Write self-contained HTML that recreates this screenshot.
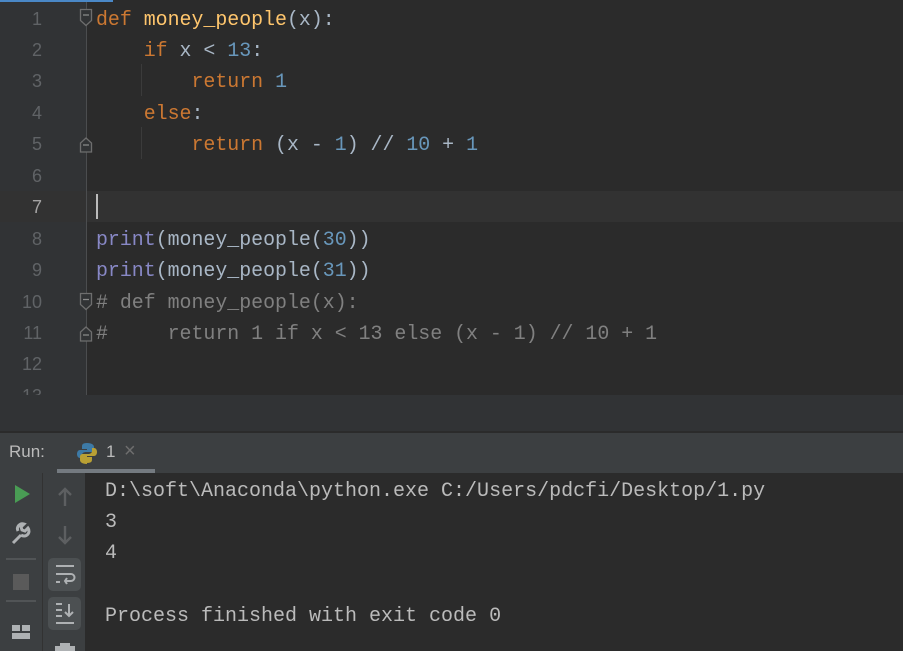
<!DOCTYPE html>
<html><head><meta charset="utf-8"><style>
*{margin:0;padding:0;box-sizing:border-box}
body{width:903px;height:651px;overflow:hidden;background:#2b2b2b;position:relative;font-family:"Liberation Mono",monospace}
.abs{position:absolute}
#gut{left:0;top:0;width:86px;height:395px;background:#313335}
#fold{left:86px;top:0;width:1px;height:395px;background:#4b4d4f}
#cur{left:0;top:191px;width:903px;height:31px;background:#323232}
#code{left:0;top:3.5px;width:903px;font-size:19.9px;line-height:31.45px;white-space:pre}
.ln{position:absolute;left:0;width:42px;text-align:right;color:#606366;font-family:"Liberation Sans",sans-serif;font-size:18px}
.cl{position:absolute;left:96px;color:#a9b7c6}
.k{color:#cc7832}.f{color:#ffc66d}.n{color:#6897bb}.b{color:#8888c6}.c{color:#808080}
.con{font-size:20px;color:#bbbbbb;white-space:pre;left:105px}
</style></head><body>
<div class="abs" id="gut"></div>
<div class="abs" id="cur"></div>
<div class="abs" id="fold"></div>
<div class="abs" style="left:0;top:0;width:113px;height:2px;background:#4a88c7"></div>
<div class="abs" style="left:141px;top:64px;width:1px;height:32px;background:#3b3b3b"></div>
<div class="abs" style="left:141px;top:127px;width:1px;height:32px;background:#3b3b3b"></div>
<div class="abs" style="left:96px;top:194px;width:2px;height:25px;background:#bbbbbb"></div>
<div class="abs" id="code">
<div class="ln" style="top:0">1</div><div class="cl" style="top:0"><span class="k">def</span> <span class="f">money_people</span>(x):</div>
<div class="ln" style="top:31.45px">2</div><div class="cl" style="top:31.45px">    <span class="k">if</span> x &lt; <span class="n">13</span>:</div>
<div class="ln" style="top:62.9px">3</div><div class="cl" style="top:62.9px">        <span class="k">return</span> <span class="n">1</span></div>
<div class="ln" style="top:94.35px">4</div><div class="cl" style="top:94.35px">    <span class="k">else</span>:</div>
<div class="ln" style="top:125.8px">5</div><div class="cl" style="top:125.8px">        <span class="k">return</span> (x - <span class="n">1</span>) // <span class="n">10</span> + <span class="n">1</span></div>
<div class="ln" style="top:157.25px">6</div>
<div class="ln" style="top:188.7px;color:#a4a3a3">7</div>
<div class="ln" style="top:220.15px">8</div><div class="cl" style="top:220.15px"><span class="b">print</span>(money_people(<span class="n">30</span>))</div>
<div class="ln" style="top:251.6px">9</div><div class="cl" style="top:251.6px"><span class="b">print</span>(money_people(<span class="n">31</span>))</div>
<div class="ln" style="top:283.05px">10</div><div class="cl c" style="top:283.05px"># def money_people(x):</div>
<div class="ln" style="top:314.5px">11</div><div class="cl c" style="top:314.5px">#     return 1 if x &lt; 13 else (x - 1) // 10 + 1</div>
<div class="ln" style="top:345.95px">12</div>
<div class="ln" style="top:377.4px">13</div>
</div>
<svg class="abs" style="left:79px;top:8px" width="14" height="350">
<g fill="#313335" stroke="#6e6e6e" stroke-width="1.3">
<path d="M1.5 1.5h11v11l-5.5 5l-5.5-5z"/><path d="M1.5 144v-9l5.5-5l5.5 5v9z"/>
<path d="M1.5 285.5h11v11l-5.5 5l-5.5-5z"/><path d="M1.5 333v-9l5.5-5l5.5 5v9z"/>
</g>
<g stroke="#8a8a8a" stroke-width="1.3"><path d="M4 7h6M4 137h6M4 291.5h6M4 327h6"/></g>
</svg>
<div class="abs" style="left:0;top:395px;width:903px;height:36px;background:#313335"></div>
<div class="abs" style="left:0;top:431px;width:903px;height:2px;background:#2b2b2b"></div>
<div class="abs" style="left:0;top:433px;width:903px;height:40px;background:#3c3f41"></div>
<div class="abs" style="left:9px;top:442px;font-family:'Liberation Sans',sans-serif;font-size:17px;color:#bbbbbb">Run:</div>
<svg class="abs" style="left:76px;top:442px" width="22" height="22" viewBox="0 0 22 22">
<path d="M11 1c-5 0-5 2-5 4v2h5v1H4c-2 0-3 2-3 4s1 4 3 4h2v-3c0-2 2-3 4-3h5c2 0 3-1 3-3V5c0-2-2-4-7-4z" fill="#3d7aa6"/>
<path d="M11 21c5 0 5-2 5-4v-2h-5v-1h7c2 0 3-2 3-4s-1-4-3-4h-2v3c0 2-2 3-4 3H7c-2 0-3 1-3 3v3c0 2 2 4 7 4z" fill="#b9a034"/>
</svg>
<div class="abs" style="left:106px;top:442px;font-family:'Liberation Sans',sans-serif;font-size:17px;color:#bbbbbb">1</div>
<div class="abs" style="left:124px;top:440px;font-family:'Liberation Sans',sans-serif;font-size:20px;color:#6e6e6e">×</div>
<div class="abs" style="left:57px;top:469px;width:98px;height:4px;background:#747a80"></div>
<div class="abs" style="left:0;top:473px;width:42px;height:178px;background:#3c3f41"></div>
<div class="abs" style="left:42px;top:473px;width:1px;height:178px;background:#323232"></div>
<div class="abs" style="left:43px;top:473px;width:42px;height:178px;background:#3c3f41"></div>
<svg class="abs" style="left:0;top:473px" width="86" height="178">
<path d="M15 12l15 9l-15 9z" fill="#499c54"/>
<path d="M13 70l8-8m0 0a5 5 0 0 0 7-7l-3 3-3-1-1-3 3-3a5 5 0 0 0-6 7" stroke="#aeb1b3" stroke-width="3" fill="none"/>
<rect x="6" y="85" width="30" height="2" fill="#515456"/>
<rect x="13" y="101" width="16" height="16" fill="#5a5a5a"/>
<rect x="6" y="127" width="30" height="2" fill="#515456"/>
<path d="M12 152h8v6h-8zM22 152h8v6h-8zM12 160h18v6h-18z" fill="#aeb1b3"/>
<path d="M65 33V16m-6 6l6-6 6 6" stroke="#5d5f61" stroke-width="2.4" fill="none"/>
<path d="M65 53v17m-6-6l6 6 6-6" stroke="#5d5f61" stroke-width="2.4" fill="none"/>
<rect x="48" y="85" width="33" height="33" rx="5" fill="#4c5052"/>
<path d="M56 93h18M56 101h15a3.5 3.5 0 0 1 0 7h-6m2-3l-2 3 2 3M56 109h4" stroke="#aeb1b3" stroke-width="2" fill="none"/>
<rect x="48" y="124" width="33" height="33" rx="5" fill="#4c5052"/>
<path d="M56 131h6M56 137h6M56 143h6M56 150h18M69 131v12m-4-4l4 4 4-4" stroke="#aeb1b3" stroke-width="2" fill="none"/>
<path d="M60 170h10v3h5v5h-20v-5h5z" fill="#aeb1b3"/>
</svg>
<div class="abs con" style="top:480px">D:\soft\Anaconda\python.exe C:/Users/pdcfi/Desktop/1.py</div>
<div class="abs con" style="top:511px">3</div>
<div class="abs con" style="top:542px">4</div>
<div class="abs con" style="top:605px">Process finished with exit code 0</div>
</body></html>
